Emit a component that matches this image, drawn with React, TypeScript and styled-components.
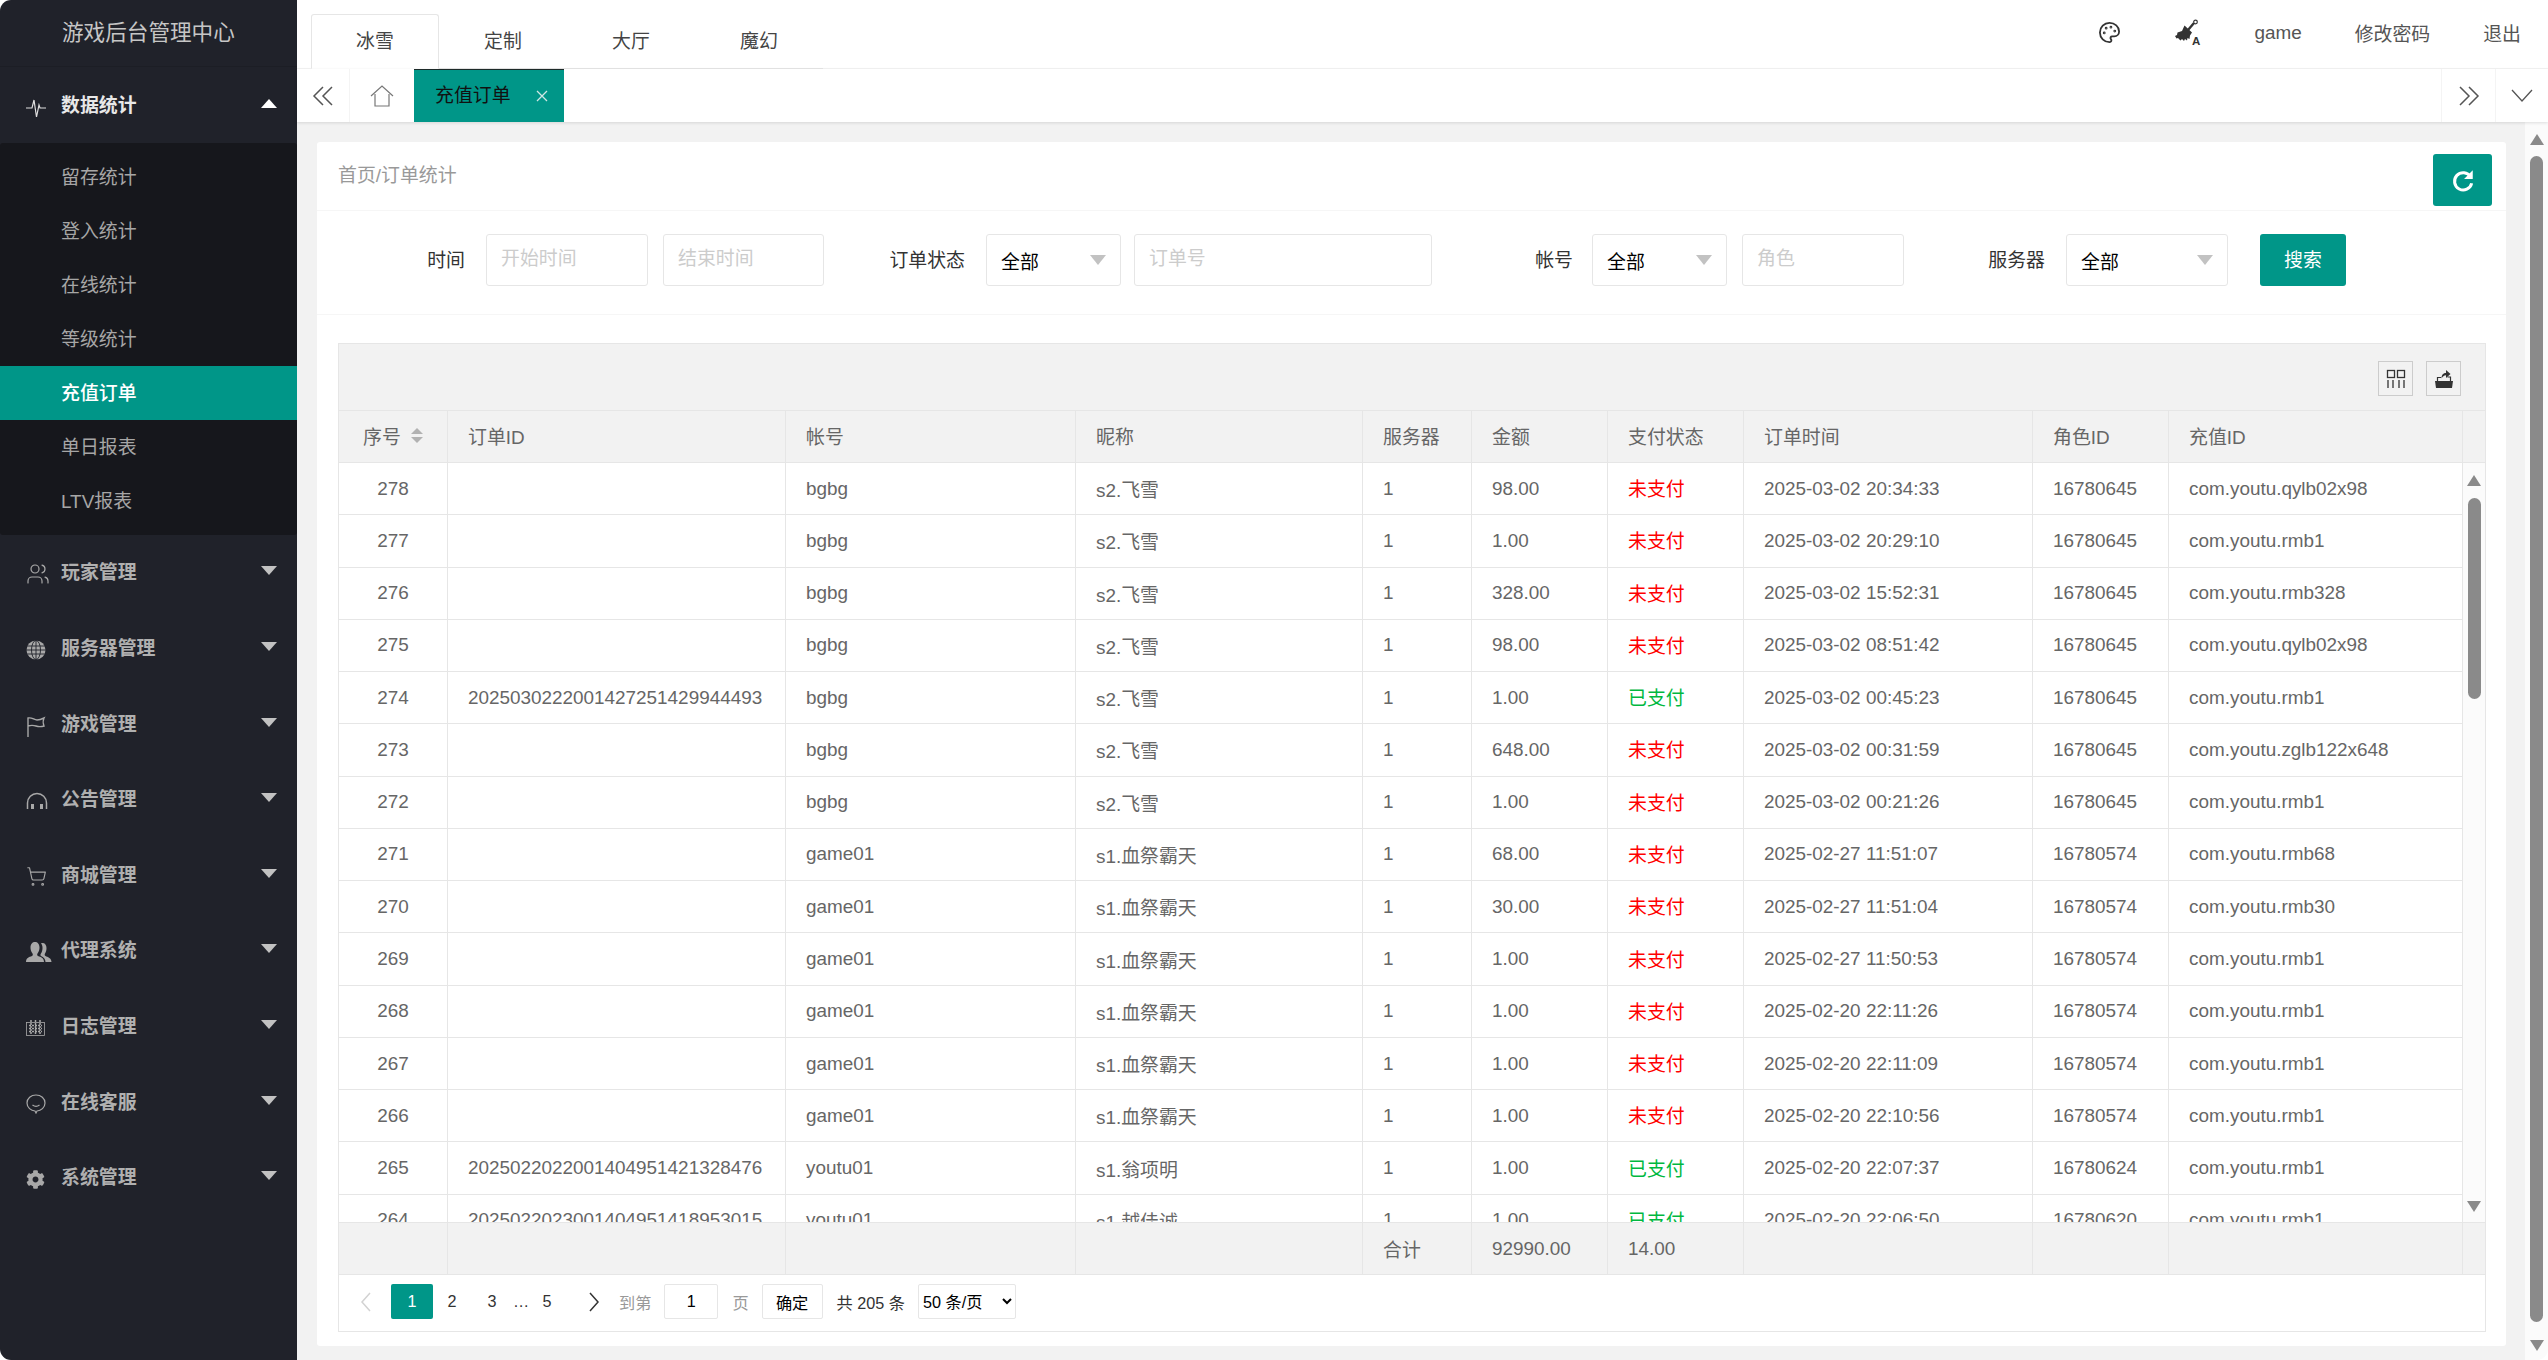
import React from 'react'
import styled, { createGlobalStyle } from 'styled-components'
import { Users, ShoppingCart, Palette } from 'lucide-react'
import { FaCog } from 'react-icons/fa'

const TEAL = '#009688'
const LINE = '#e6e6e6'
const BODY_COLS = '109px 338px 290px 287px 109px 136px 136px 289px 136px 294px'
const COLS = `${BODY_COLS} 22px`

const GlobalStyle = createGlobalStyle`
    html, body {
        margin: 0;
        padding: 0;
        background: #fff;
        overflow: hidden;
    }
    * {
        box-sizing: border-box;
    }
    body {
        font-family: "Liberation Sans", "Noto Sans CJK SC", Arial, sans-serif;
        font-size: 18.9px;
    }
`

type NavEntry = { label: string; icon: React.ReactNode }

const PulseIcon = () => (
    <svg width="20" height="22" viewBox="0 0 20 22" fill="none" stroke="#e0e0e0" strokeWidth="1.2">
        <path d="M0 12h6l2-8 2.5 17L13 9l1 3h6" />
    </svg>
)
const GlobeIcon = () => (
    <svg width="20" height="20" viewBox="0 0 20 20">
        <circle cx="10" cy="10" r="9.5" fill="#a8a8a8" />
        <g fill="none" stroke="#20222a" strokeWidth="0.9">
            <ellipse cx="10" cy="10" rx="4.5" ry="9.5" />
            <path d="M10 0v20M1 6h18M0 10h20M1 14h18" />
        </g>
    </svg>
)
const FlagIcon = () => (
    <svg width="20" height="22" viewBox="0 0 20 22" fill="none" stroke="#a8a8a8" strokeWidth="1.4">
        <path d="M2 22V3c4-1 6 2 9 2s5-1 7-2c-1 2-1 6 0 8-3 1-5 1-8 0s-5-1-8 0" />
    </svg>
)
const HeadsetIcon = () => (
    <svg width="22" height="18" viewBox="0 0 22 18" fill="none" stroke="#a8a8a8" strokeWidth="1.5">
        <path d="M1.5 17v-6a9.5 9.5 0 0 1 19 0v6" />
        <path d="M6.5 12v5M15.500 12v5" strokeWidth="3" />
    </svg>
)
const TeamIcon = () => (
    <svg width="26" height="20" viewBox="0 0 26 20" fill="#a8a8a8">
        <path d="M0 20c0-4 3-5 6-6 1-.5 1-1.500.5-2.500C5 9.500 4.500 7.500 4.500 5.500 4.500 2 6.500 0 9 0s4.500 2 4.500 5.500c0 2-.5 4-2 6-.5 1-.5 2 .5 2.500 3 1 6 2 6 6z" />
        <path d="M19.500 20c0-3-2-5-4.500-6-.8-.4-.6-1.500-.2-2.200C16 10 16.500 8 16.500 6c0-2-.5-3.500-1.500-4.500C15.500 1 16 1 16.500 1c2.500 0 4 2 4 5 0 2-.5 4-1.500 5.500-.5 1-.4 2 .5 2.500 2 1 6 2 6 6z" />
    </svg>
)
const LogIcon = () => (
    <svg width="19" height="16" viewBox="0 0 19 16" fill="none" stroke="#a8a8a8">
        <rect x="0.5" y="2.500" width="18" height="13" strokeWidth="0.8" />
        <path d="M5 0v14M9.500 0v14M14 0v14M3 5.500h13M3 8.500h13M3 11.500h13" strokeWidth="1.5" strokeDasharray="2 1" />
    </svg>
)
const ChatIcon = () => (
    <svg width="20" height="20" viewBox="0 0 20 20" fill="none" stroke="#a8a8a8" strokeWidth="1.200">
        <path d="M10 1c5 0 9 3.500 9 8s-4 8-8 8l-1 2-1-2c-4 0-8-3.500-8-8s4-8 9-8z" />
        <path d="M6.500 11c2 1.500 5 1.500 7 0" />
    </svg>
)
const BrushIcon = () => (
    <svg width="27" height="27" viewBox="0 0 27 27">
        <path d="M14 11l6-7" fill="none" stroke="#333" strokeWidth="2.400" />
        <circle cx="21.500" cy="3" r="1.800" fill="none" stroke="#333" strokeWidth="1.200" />
        <path d="M10.500 6.500l7.500 7-2 3-.5 3.500-2-1-.5 2.500-2-1.500-1 2-2-2-1.500 1.500L4 19l-1.500.5L1 17l2-1 .5-2.500L8 12z" fill="#333" />
        <text x="18" y="26" fontSize="11.500" fontWeight="700" fill="#333" fontFamily="Liberation Sans, sans-serif">A</text>
    </svg>
)

const menus: NavEntry[] = [
    { label: '玩家管理', icon: <Users size={24} color="#a8a8a8" strokeWidth={1.2} /> },
    { label: '服务器管理', icon: <GlobeIcon /> },
    { label: '游戏管理', icon: <FlagIcon /> },
    { label: '公告管理', icon: <HeadsetIcon /> },
    { label: '商城管理', icon: <ShoppingCart size={21} color="#a8a8a8" strokeWidth={1.3} /> },
    { label: '代理系统', icon: <TeamIcon /> },
    { label: '日志管理', icon: <LogIcon /> },
    { label: '在线客服', icon: <ChatIcon /> },
    { label: '系统管理', icon: <FaCog size={19} color="#a8a8a8" /> },
]

const subMenus = ['留存统计', '登入统计', '在线统计', '等级统计', '充值订单', '单日报表', 'LTV报表']

type Order = [number, string, string, string, string, string, boolean, string, string, string]

const orders: Order[] = [
    [278, '', 'bgbg', 's2.飞雪', '1', '98.00', false, '2025-03-02 20:34:33', '16780645', 'com.youtu.qylb02x98'],
    [277, '', 'bgbg', 's2.飞雪', '1', '1.00', false, '2025-03-02 20:29:10', '16780645', 'com.youtu.rmb1'],
    [276, '', 'bgbg', 's2.飞雪', '1', '328.00', false, '2025-03-02 15:52:31', '16780645', 'com.youtu.rmb328'],
    [275, '', 'bgbg', 's2.飞雪', '1', '98.00', false, '2025-03-02 08:51:42', '16780645', 'com.youtu.qylb02x98'],
    [274, '2025030222001427251429944493', 'bgbg', 's2.飞雪', '1', '1.00', true, '2025-03-02 00:45:23', '16780645', 'com.youtu.rmb1'],
    [273, '', 'bgbg', 's2.飞雪', '1', '648.00', false, '2025-03-02 00:31:59', '16780645', 'com.youtu.zglb122x648'],
    [272, '', 'bgbg', 's2.飞雪', '1', '1.00', false, '2025-03-02 00:21:26', '16780645', 'com.youtu.rmb1'],
    [271, '', 'game01', 's1.血祭霸天', '1', '68.00', false, '2025-02-27 11:51:07', '16780574', 'com.youtu.rmb68'],
    [270, '', 'game01', 's1.血祭霸天', '1', '30.00', false, '2025-02-27 11:51:04', '16780574', 'com.youtu.rmb30'],
    [269, '', 'game01', 's1.血祭霸天', '1', '1.00', false, '2025-02-27 11:50:53', '16780574', 'com.youtu.rmb1'],
    [268, '', 'game01', 's1.血祭霸天', '1', '1.00', false, '2025-02-20 22:11:26', '16780574', 'com.youtu.rmb1'],
    [267, '', 'game01', 's1.血祭霸天', '1', '1.00', false, '2025-02-20 22:11:09', '16780574', 'com.youtu.rmb1'],
    [266, '', 'game01', 's1.血祭霸天', '1', '1.00', false, '2025-02-20 22:10:56', '16780574', 'com.youtu.rmb1'],
    [265, '2025022022001404951421328476', 'youtu01', 's1.翁项明', '1', '1.00', true, '2025-02-20 22:07:37', '16780624', 'com.youtu.rmb1'],
    [264, '2025022023001404951418953015', 'youtu01', 's1.越佳诚', '1', '1.00', true, '2025-02-20 22:06:50', '16780620', 'com.youtu.rmb1'],
]

const headers = ['订单ID', '帐号', '昵称', '服务器', '金额', '支付状态', '订单时间', '角色ID', '充值ID']

const App = () => {
    return (
        <Shell>
            <GlobalStyle />
            <Sidebar>
                <Brand>游戏后台管理中心</Brand>
                <NavHead $open>
                    <NavIcon><PulseIcon /></NavIcon>
                    <span>数据统计</span>
                    <Caret $up />
                </NavHead>
                <SubNav>
                    {subMenus.map((texto) => (
                        <SubItem key={texto} $active={texto === '充值订单'}>{texto}</SubItem>
                    ))}
                </SubNav>
                {menus.map((item) => (
                    <NavHead key={item.label}>
                        <NavIcon>{item.icon}</NavIcon>
                        <span>{item.label}</span>
                        <Caret />
                    </NavHead>
                ))}
            </Sidebar>

            <Main>
                <TopBar>
                    <TopTabs>
                        <TopTab $active>冰雪</TopTab>
                        <TopTab>定制</TopTab>
                        <TopTab>大厅</TopTab>
                        <TopTab>魔幻</TopTab>
                    </TopTabs>
                    <TopActions>
                        <Palette size={23} color="#333" strokeWidth={1.9} />
                        <BrushIcon />
                        <span>game</span>
                        <span>修改密码</span>
                        <span>退出</span>
                    </TopActions>
                </TopBar>

                <TabStrip>
                    <StripCell $width={53} $side="right">
                        <svg width="22" height="22" viewBox="0 0 22 22" fill="none" stroke="#555" strokeWidth="1.500">
                            <path d="M11 2L2 11l9 9M20 2l-9 9 9 9" />
                        </svg>
                    </StripCell>
                    <StripCell $width={64}>
                        <svg width="24" height="22" viewBox="0 0 24 22" fill="none" stroke="#777" strokeWidth="1.200">
                            <path d="M1 11L12 1l11 10M5 9v12h14V9" />
                        </svg>
                    </StripCell>
                    <ActiveTab>
                        <span>充值订单</span>
                        <CloseMark>
                            <svg width="12" height="12" viewBox="0 0 12 12" fill="none" stroke="#cfe7e4" strokeWidth="1.300">
                                <path d="M1 1l10 10M11 1L1 11" />
                            </svg>
                        </CloseMark>
                    </ActiveTab>
                    <StripSpacer />
                    <StripCell $width={54} $side="left">
                        <svg width="22" height="22" viewBox="0 0 22 22" fill="none" stroke="#555" strokeWidth="1.500">
                            <path d="M2 2l9 9-9 9M11 2l9 9-9 9" />
                        </svg>
                    </StripCell>
                    <StripCell $width={53} $side="left">
                        <svg width="22" height="14" viewBox="0 0 22 14" fill="none" stroke="#555" strokeWidth="1.300">
                            <path d="M1 1l10 11L21 1" />
                        </svg>
                    </StripCell>
                </TabStrip>

                <ContentRow>
                    <ContentArea>
                        <Card>
                            <CardHeader>
                                <Crumb>首页/订单统计</Crumb>
                                <RefreshButton>
                                    <svg width="26" height="26" viewBox="0 0 24 24" fill="none" stroke="#fff" strokeWidth="2.800">
                                        <path d="M19 9a8 8 0 1 0 1 6" />
                                        <path d="M21 3v8h-8z" fill="#fff" stroke="none" />
                                    </svg>
                                </RefreshButton>
                            </CardHeader>

                            <FilterRow>
                                <FilterLabel $width={148}>时间</FilterLabel>
                                <TextInput $width={162} placeholder="开始时间" />
                                <TextInput $width={161} $gap={15} placeholder="结束时间" />
                                <FilterLabel $width={141}>订单状态</FilterLabel>
                                <SelectBox $width={135}>全部<SelectCaret /></SelectBox>
                                <TextInput $width={298} $gap={13} placeholder="订单号" />
                                <FilterLabel $width={141} $gap={19}>帐号</FilterLabel>
                                <SelectBox $width={135}>全部<SelectCaret /></SelectBox>
                                <TextInput $width={162} $gap={15} placeholder="角色" />
                                <FilterLabel $width={141}>服务器</FilterLabel>
                                <SelectBox $width={162}>全部<SelectCaret /></SelectBox>
                                <SearchButton>搜索</SearchButton>
                            </FilterRow>

                            <TableBox>
                                <Toolbar>
                                    <ToolButton>
                                        <svg width="20" height="20" viewBox="0 0 20 20" fill="none" stroke="#333" strokeWidth="1.300">
                                            <rect x="1.500" y="1.500" width="7" height="7" />
                                            <rect x="11.500" y="1.500" width="7" height="7" />
                                            <path d="M2 11v8M7 11v8M13 11v8M18 11v8" />
                                        </svg>
                                    </ToolButton>
                                    <ToolButton>
                                        <svg width="20" height="20" viewBox="0 0 20 20" fill="#333">
                                            <path d="M1 12h18l-1 7H2z" />
                                            <path d="M3.500 12V8.500H7M16.500 12V8h-3" fill="none" stroke="#333" strokeWidth="1.200" />
                                            <path d="M7.500 9.500C7.500 5.500 9.500 4 12 4V1l4.500 4-4.500 4V6.200c-2 0-3.500 1.300-4.500 3.300z" />
                                        </svg>
                                    </ToolButton>
                                </Toolbar>

                                <HeadRow>
                                    <HeadCell $center>
                                        序号
                                        <SortMark><SortUp /><SortDown /></SortMark>
                                    </HeadCell>
                                    {headers.map((texto) => (
                                        <HeadCell key={texto}>{texto}</HeadCell>
                                    ))}
                                    <HeadCell />
                                </HeadRow>

                                <BodyWrap>
                                    <BodyRows>
                                        {orders.map((row) => (
                                            <BodyRow key={row[0]}>
                                                <BodyCell $center>{row[0]}</BodyCell>
                                                <BodyCell>{row[1]}</BodyCell>
                                                <BodyCell>{row[2]}</BodyCell>
                                                <BodyCell>{row[3]}</BodyCell>
                                                <BodyCell>{row[4]}</BodyCell>
                                                <BodyCell>{row[5]}</BodyCell>
                                                <BodyCell>
                                                    <PayState $paid={row[6]}>{row[6] ? '已支付' : '未支付'}</PayState>
                                                </BodyCell>
                                                <BodyCell>{row[7]}</BodyCell>
                                                <BodyCell>{row[8]}</BodyCell>
                                                <BodyCell>{row[9]}</BodyCell>
                                            </BodyRow>
                                        ))}
                                    </BodyRows>
                                    <TableGutter>
                                        <ScrollUp />
                                        <TableThumb />
                                        <ScrollDown />
                                    </TableGutter>
                                </BodyWrap>

                                <FootRow>
                                    <FootCell />
                                    <FootCell />
                                    <FootCell />
                                    <FootCell />
                                    <FootCell>合计</FootCell>
                                    <FootCell>92990.00</FootCell>
                                    <FootCell>14.00</FootCell>
                                    <FootCell />
                                    <FootCell />
                                    <FootCell />
                                    <FootCell />
                                </FootRow>

                                <Pager>
                                    <PageArrow $width={38} $off>
                                        <svg width="12" height="20" viewBox="0 0 12 20" fill="none" stroke="#d2d2d2" strokeWidth="1.500">
                                            <path d="M10 1l-8 9 8 9" />
                                        </svg>
                                    </PageArrow>
                                    <PageCurrent>1</PageCurrent>
                                    <PageItem $width={38}>2</PageItem>
                                    <PageItem $width={42}>3</PageItem>
                                    <PageItem $width={12}>…</PageItem>
                                    <PageItem $width={44}>5</PageItem>
                                    <PageArrow $width={50}>
                                        <svg width="12" height="20" viewBox="0 0 12 20" fill="none" stroke="#333" strokeWidth="1.500">
                                            <path d="M2 1l8 9-8 9" />
                                        </svg>
                                    </PageArrow>
                                    <PagerNote>到第</PagerNote>
                                    <PageInput defaultValue="1" />
                                    <PagerNote $gap={14}>页</PagerNote>
                                    <PagerButton>确定</PagerButton>
                                    <PagerTotal>共 205 条</PagerTotal>
                                    <PagerSelect defaultValue="50">
                                        <option value="50">50 条/页</option>
                                    </PagerSelect>
                                </Pager>
                            </TableBox>
                        </Card>
                    </ContentArea>

                    <PageGutter>
                        <ScrollUp />
                        <PageThumb />
                        <ScrollDown />
                    </PageGutter>
                </ContentRow>
            </Main>
        </Shell>
    )
}

export default App

const Shell = styled.div`
    display: flex;
    width: 2548px;
    height: 1360px;
    border-radius: 11px;
    overflow: hidden;
    background: #fff;
`

const Sidebar = styled.aside`
    width: 297px;
    flex-shrink: 0;
    background-color: #20222a;
    color: #b4b4b4;
`

const Brand = styled.div`
    height: 67px;
    padding: 0 0 5px 62px;
    display: flex;
    align-items: center;
    font-size: 21.6px;
    color: #c6c6c6;
    border-bottom: 1px solid #1c1e25;
`

const NavHead = styled.div<{ $open?: boolean }>`
    position: relative;
    height: 75.6px;
    padding: 0 0 3px 61px;
    display: flex;
    align-items: center;
    font-weight: 700;
    font-size: 18.9px;
    color: ${(p) => (p.$open ? '#e8e8e8' : '#b0b0b0')};
`

const NavIcon = styled.span`
    position: absolute;
    left: 26px;
    top: 50%;
    width: 26px;
    height: 26px;
    margin-top: -11px;
    display: flex;
    align-items: center;
`

const Caret = styled.i<{ $up?: boolean }>`
    position: absolute;
    right: 20px;
    top: 50%;
    margin-top: -6px;
    width: 0;
    height: 0;
    border-left: 8px solid transparent;
    border-right: 8px solid transparent;
    ${(p) => (p.$up ? 'border-bottom: 9px solid #fff;' : 'border-top: 9px solid #c2c2c2;')}
`

const SubNav = styled.div`
    padding: 7px 0;
    background-color: #16171c;
    border-radius: 3px;
`

const SubItem = styled.div<{ $active?: boolean }>`
    height: 54px;
    padding: 0 0 3px 61px;
    display: flex;
    align-items: center;
    color: ${(p) => (p.$active ? '#fff' : '#a6a6a6')};
    background-color: ${(p) => (p.$active ? TEAL : 'transparent')};
    font-weight: ${(p) => (p.$active ? 500 : 400)};
`

const Main = styled.main`
    flex: 1;
    min-width: 0;
    display: flex;
    flex-direction: column;
`

const TopBar = styled.header`
    height: 69px;
    display: flex;
    justify-content: space-between;
    border-bottom: 1px solid #f4f4f4;
`

const TopTabs = styled.div`
    margin: 14px 0 -1px 14px;
    display: flex;
    width: 512px;
    border-bottom: 1px solid ${LINE};
`

const TopTab = styled.div<{ $active?: boolean }>`
    width: 128px;
    height: 55px;
    padding-bottom: 5px;
    display: flex;
    align-items: center;
    justify-content: center;
    color: #444;
    ${(p) =>
        p.$active
            ? `border: 1px solid ${LINE}; border-bottom-color: #fff; border-radius: 3px 3px 0 0;`
            : ''}
`

const TopActions = styled.div`
    display: flex;
    align-items: center;
    gap: 53px;
    padding: 0 27px 1px 0;
    color: #555;
    height: 66px;
`

const TabStrip = styled.nav`
    position: relative;
    z-index: 1;
    height: 53px;
    display: flex;
    background: #fff;
    box-shadow: 0 1px 3px rgba(0, 0, 0, 0.12);
`

const StripCell = styled.div<{ $width: number; $side?: 'left' | 'right' }>`
    width: ${(p) => p.$width}px;
    display: flex;
    align-items: center;
    justify-content: center;
    ${(p) => (p.$side ? `border-${p.$side}: 1px solid #f4f4f4;` : '')}
`

const StripSpacer = styled.div`
    flex: 1;
`

const ActiveTab = styled.div`
    width: 150px;
    padding: 0 16px 6px 21px;
    display: flex;
    align-items: center;
    background-color: ${TEAL};
    color: #111;
    border-top: 1px solid #1d2a29;
`

const CloseMark = styled.span`
    margin-left: auto;
    padding-top: 6px;
    display: flex;
`

const ContentRow = styled.div`
    flex: 1;
    min-height: 0;
    display: flex;
`

const ContentArea = styled.div`
    flex: 1;
    min-width: 0;
    padding: 20px 19px 14px 20px;
    background-color: #f2f2f2;
`

const Card = styled.section`
    height: 100%;
    display: flex;
    flex-direction: column;
    background: #fff;
    border-radius: 3px;
`

const CardHeader = styled.div`
    height: 69px;
    padding: 12px 14px 4px 21px;
    flex-shrink: 0;
    display: flex;
    justify-content: space-between;
    align-items: center;
    border-bottom: 1px solid #f6f6f6;
`

const Crumb = styled.span`
    color: #999;
    margin-top: -13px;
`

const RefreshButton = styled.button`
    width: 59px;
    height: 52px;
    padding: 0;
    display: flex;
    align-items: center;
    justify-content: center;
    border: none;
    border-radius: 3px;
    background-color: ${TEAL};
`

const FilterRow = styled.div`
    height: 104px;
    flex-shrink: 0;
    padding: 23px 0 28px;
    display: flex;
    align-items: center;
    border-bottom: 1px solid #f6f6f6;
`

const FilterLabel = styled.label<{ $width: number; $gap?: number }>`
    width: ${(p) => p.$width}px;
    margin-right: ${(p) => p.$gap ?? 21}px;
    padding-bottom: 4px;
    text-align: right;
    color: #333;
    flex-shrink: 0;
`

const TextInput = styled.input<{ $width: number; $gap?: number }>`
    width: ${(p) => p.$width}px;
    height: 52px;
    margin-left: ${(p) => p.$gap ?? 0}px;
    padding: 0 14px 3px;
    flex-shrink: 0;
    font: inherit;
    border: 1px solid ${LINE};
    border-radius: 3px;
    outline: none;
    &::placeholder {
        color: #ccc;
    }
`

const SelectBox = styled.div<{ $width: number }>`
    position: relative;
    width: ${(p) => p.$width}px;
    height: 52px;
    padding: 0 0 0 14px;
    flex-shrink: 0;
    display: flex;
    align-items: center;
    color: #000;
    border: 1px solid ${LINE};
    border-radius: 3px;
`

const SelectCaret = styled.i`
    position: absolute;
    right: 14px;
    top: 20px;
    width: 0;
    height: 0;
    border-left: 8px solid transparent;
    border-right: 8px solid transparent;
    border-top: 10px solid #c2c2c2;
`

const SearchButton = styled.button`
    width: 86px;
    height: 52px;
    margin-left: 32px;
    padding: 0 0 4px;
    flex-shrink: 0;
    font: inherit;
    color: #fff;
    background-color: ${TEAL};
    border: none;
    border-radius: 3px;
`

const TableBox = styled.div`
    flex: 1;
    min-height: 0;
    margin: 28px 20px 14px 21px;
    display: flex;
    flex-direction: column;
    border: 1px solid ${LINE};
`

const Toolbar = styled.div`
    height: 66px;
    padding: 17px 24px 0 0;
    flex-shrink: 0;
    display: flex;
    justify-content: flex-end;
    gap: 13px;
    background-color: #f2f2f2;
`

const ToolButton = styled.div`
    width: 35px;
    height: 35px;
    display: flex;
    align-items: center;
    justify-content: center;
    border: 1px solid #ccc;
`

const HeadRow = styled.div`
    height: 53px;
    flex-shrink: 0;
    display: grid;
    grid-template-columns: ${COLS};
    background-color: #f2f2f2;
    border-top: 1px solid ${LINE};
    border-bottom: 1px solid ${LINE};
`

const HeadCell = styled.div<{ $center?: boolean }>`
    padding: 0 0 3px ${(p) => (p.$center ? 0 : 20)}px;
    display: flex;
    align-items: center;
    justify-content: ${(p) => (p.$center ? 'center' : 'flex-start')};
    color: #666;
    border-right: 1px solid ${LINE};
    &:last-child {
        border-right: none;
    }
`

const SortMark = styled.span`
    margin-left: 10px;
    display: flex;
    flex-direction: column;
    gap: 3px;
`

const SortUp = styled.i`
    width: 0;
    height: 0;
    border-left: 6px solid transparent;
    border-right: 6px solid transparent;
    border-bottom: 6px solid #b2b2b2;
`

const SortDown = styled.i`
    width: 0;
    height: 0;
    border-left: 6px solid transparent;
    border-right: 6px solid transparent;
    border-top: 6px solid #b2b2b2;
`

const BodyWrap = styled.div`
    flex: 1;
    min-height: 0;
    display: flex;
    overflow: hidden;
`

const BodyRows = styled.div`
    width: 2124px;
    flex-shrink: 0;
`

const BodyRow = styled.div`
    height: 52.27px;
    display: grid;
    grid-template-columns: ${BODY_COLS};
    border-bottom: 1px solid ${LINE};
`

const BodyCell = styled.div<{ $center?: boolean }>`
    padding-left: ${(p) => (p.$center ? 0 : 20)}px;
    display: flex;
    align-items: center;
    justify-content: ${(p) => (p.$center ? 'center' : 'flex-start')};
    color: #666;
    white-space: nowrap;
    border-right: 1px solid ${LINE};
`

const PayState = styled.span<{ $paid: boolean }>`
    padding-bottom: 2px;
    color: ${(p) => (p.$paid ? '#00b83f' : '#ff0000')};
`

const TableGutter = styled.div`
    flex: 1;
    padding: 12px 0 10px;
    display: flex;
    flex-direction: column;
    align-items: center;
    background-color: #fbfbfb;
`

const ScrollUp = styled.i`
    flex-shrink: 0;
    width: 0;
    height: 0;
    border-left: 7px solid transparent;
    border-right: 7px solid transparent;
    border-bottom: 11px solid #8a8a8a;
`

const ScrollDown = styled.i`
    flex-shrink: 0;
    margin-top: auto;
    width: 0;
    height: 0;
    border-left: 7px solid transparent;
    border-right: 7px solid transparent;
    border-top: 11px solid #8a8a8a;
`

const TableThumb = styled.div`
    width: 13px;
    height: 201px;
    margin-top: 12px;
    border-radius: 7px;
    background-color: #8a8a8a;
`

const FootRow = styled.div`
    height: 53px;
    flex-shrink: 0;
    display: grid;
    grid-template-columns: ${COLS};
    background-color: #f2f2f2;
    border-top: 1px solid ${LINE};
    border-bottom: 1px solid ${LINE};
`

const FootCell = styled.div`
    padding-left: 20px;
    display: flex;
    align-items: center;
    color: #666;
    border-right: 1px solid ${LINE};
    &:last-child {
        border-right: none;
    }
`

const Pager = styled.div`
    height: 56px;
    flex-shrink: 0;
    padding: 0 0 3px 8px;
    display: flex;
    align-items: center;
    font-size: 16.2px;
    color: #333;
`

const PageArrow = styled.div<{ $width: number; $off?: boolean }>`
    width: ${(p) => p.$width}px;
    display: flex;
    justify-content: center;
    margin-right: ${(p) => (p.$off ? 6 : 0)}px;
`

const PageCurrent = styled.div`
    width: 42px;
    height: 35px;
    display: flex;
    align-items: center;
    justify-content: center;
    color: #fff;
    background-color: ${TEAL};
    border-radius: 2px;
`

const PageItem = styled.div<{ $width: number }>`
    width: ${(p) => p.$width}px;
    text-align: center;
`

const PagerNote = styled.span<{ $gap?: number }>`
    margin-left: ${(p) => p.$gap ?? 0}px;
    color: #999;
`

const PageInput = styled.input`
    width: 54px;
    height: 35px;
    margin-left: 13px;
    padding: 0;
    font: inherit;
    color: #000;
    text-align: center;
    border: 1px solid ${LINE};
    border-radius: 2px;
    outline: none;
`

const PagerButton = styled.button`
    width: 61px;
    height: 35px;
    margin-left: 13px;
    padding: 0;
    font: inherit;
    color: #000;
    background: #fff;
    border: 1px solid ${LINE};
    border-radius: 2px;
`

const PagerTotal = styled.span`
    margin-left: 14px;
    white-space: nowrap;
`

const PagerSelect = styled.select`
    width: 98px;
    height: 35px;
    margin-left: 13px;
    font: inherit;
    color: #000;
    background: #fff;
    border: 1px solid ${LINE};
    border-radius: 2px;
    outline: none;
`

const PageGutter = styled.div`
    width: 23px;
    flex-shrink: 0;
    padding: 12px 0 9px;
    display: flex;
    flex-direction: column;
    align-items: center;
    background-color: #fbfbfb;
`

const PageThumb = styled.div`
    width: 13px;
    height: 1166px;
    margin-top: 11px;
    border-radius: 7px;
    background-color: #8a8a8a;
`
